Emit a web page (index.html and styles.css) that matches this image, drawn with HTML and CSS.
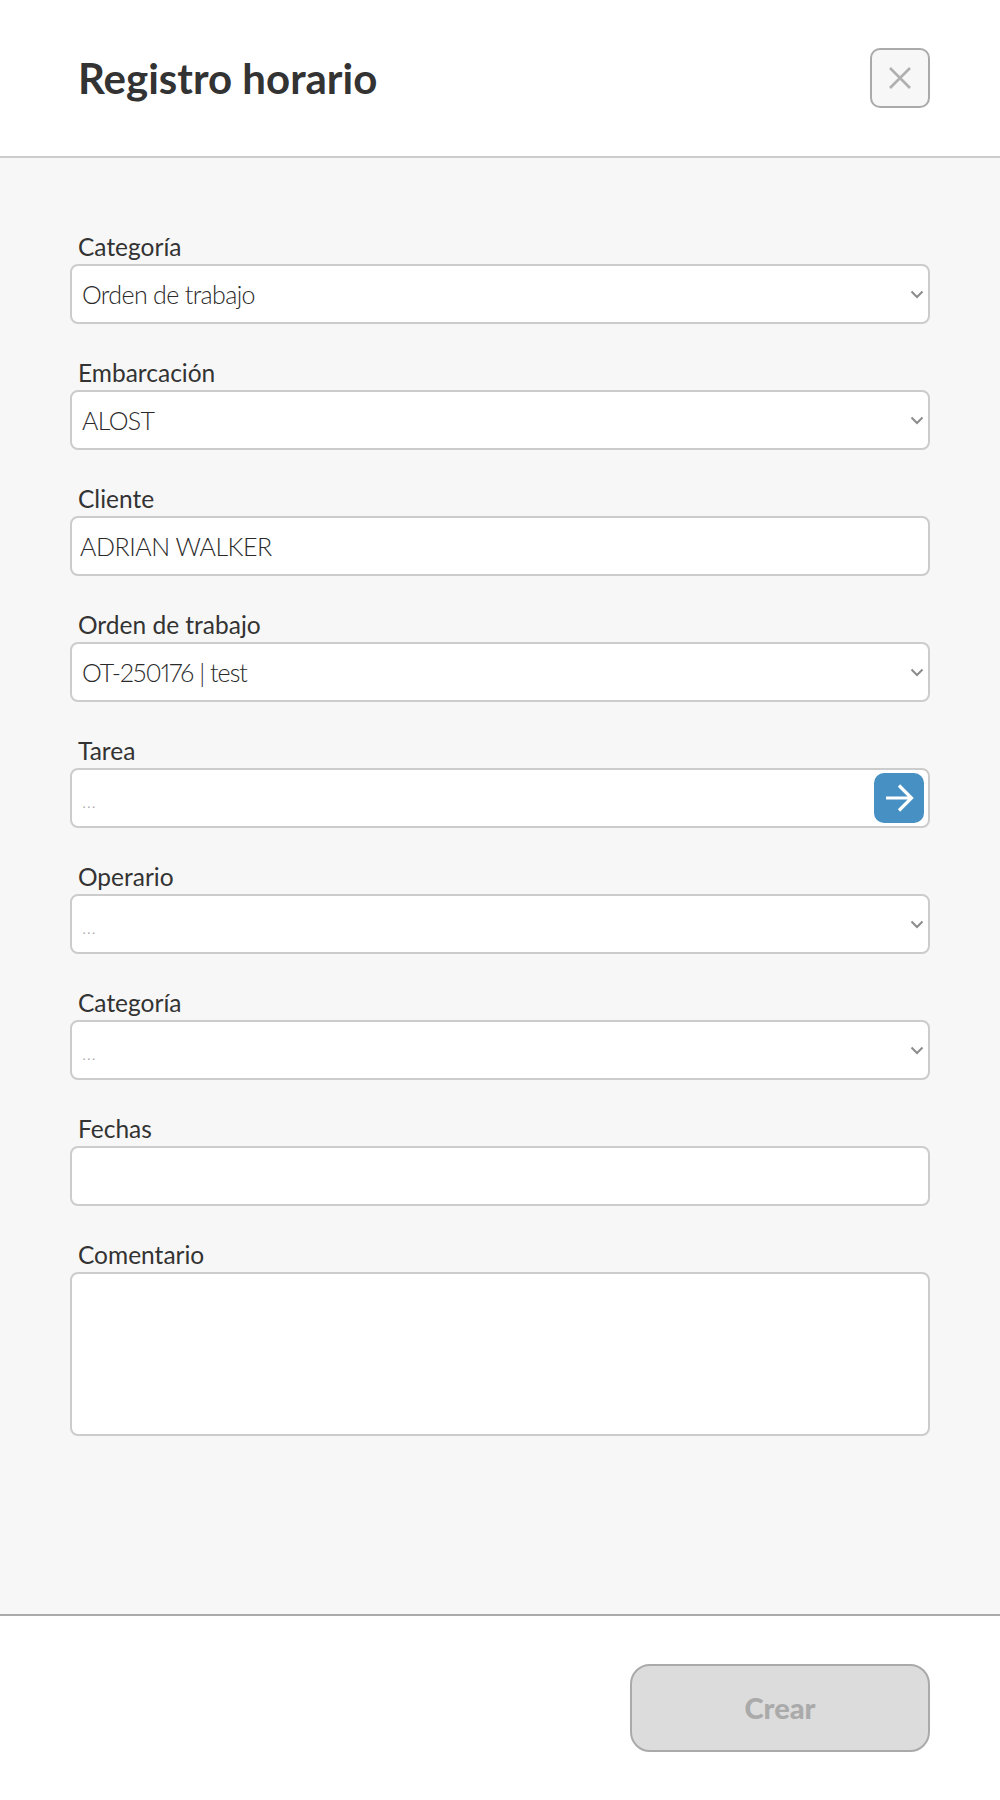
FILE: index.html
```html
<!DOCTYPE html>
<html lang="es">
<head>
<meta charset="utf-8">
<title>Registro horario</title>
<link rel="stylesheet" href="styles.css">
</head>
<body>
<div class="modal">
  <header class="head">
    <h1 class="title">Registro horario</h1>
    <button class="close" type="button" aria-label="Cerrar">
      <svg width="24" height="24" viewBox="0 0 24 24"><path d="M2 2 L22 22 M22 2 L2 22" stroke="#b0b0b0" stroke-width="2.6" fill="none"/></svg>
    </button>
  </header>
  <main class="body">
    <div class="field">
      <label class="label">Categoría</label>
      <div class="control select"><span class="value">Orden de trabajo</span><svg class="chev" width="14" height="9" viewBox="0 0 14 9"><path d="M1.5 1.500 L7 7 L12.500 1.500" stroke="#8c8c8c" stroke-width="2" fill="none"/></svg></div>
    </div>
    <div class="field">
      <label class="label">Embarcación</label>
      <div class="control select"><span class="value">ALOST</span><svg class="chev" width="14" height="9" viewBox="0 0 14 9"><path d="M1.5 1.500 L7 7 L12.500 1.500" stroke="#8c8c8c" stroke-width="2" fill="none"/></svg></div>
    </div>
    <div class="field">
      <label class="label">Cliente</label>
      <div class="control text"><span class="value">ADRIAN WALKER</span></div>
    </div>
    <div class="field">
      <label class="label">Orden de trabajo</label>
      <div class="control select"><span class="value code">OT-250176 | test</span><svg class="chev" width="14" height="9" viewBox="0 0 14 9"><path d="M1.5 1.500 L7 7 L12.500 1.500" stroke="#8c8c8c" stroke-width="2" fill="none"/></svg></div>
    </div>
    <div class="field">
      <label class="label">Tarea</label>
      <div class="control task"><span class="value empty">...</span>
        <button class="go" type="button" aria-label="Buscar"><svg width="30" height="30" viewBox="0 0 30 30"><path d="M2 15 H27 M15 2.500 L27.500 15 L15 27.500" stroke="#fff" stroke-width="3.200" fill="none"/></svg></button>
      </div>
    </div>
    <div class="field">
      <label class="label">Operario</label>
      <div class="control select"><span class="value empty">...</span><svg class="chev" width="14" height="9" viewBox="0 0 14 9"><path d="M1.5 1.500 L7 7 L12.500 1.500" stroke="#8c8c8c" stroke-width="2" fill="none"/></svg></div>
    </div>
    <div class="field">
      <label class="label">Categoría</label>
      <div class="control select"><span class="value empty">...</span><svg class="chev" width="14" height="9" viewBox="0 0 14 9"><path d="M1.5 1.500 L7 7 L12.500 1.500" stroke="#8c8c8c" stroke-width="2" fill="none"/></svg></div>
    </div>
    <div class="field">
      <label class="label">Fechas</label>
      <div class="control text"></div>
    </div>
    <div class="field">
      <label class="label">Comentario</label>
      <div class="control area"></div>
    </div>
  </main>
  <footer class="foot">
    <button class="submit" type="button" disabled>Crear</button>
  </footer>
</div>
</body>
</html>
```
FILE: styles.css
```css
* { box-sizing: border-box; }
html, body { margin: 0; padding: 0; background: #fff; }
body { font-family: "Lato", "Noto Sans", sans-serif; color: #333; }
.modal { width: 1000px; height: 1800px; display: flex; flex-direction: column; }
.head { height: 158px; padding: 47px 70px 0 78px; display: flex; justify-content: space-between; align-items: flex-start; border-bottom: 2px solid #ccc; background: #fff; }
.title { margin: 0; font-size: 42px; line-height: 62px; font-weight: 700; color: #333; }
.close { width: 60px; height: 60px; margin-top: 1px; padding: 0; display: flex; align-items: center; justify-content: center; background: #f7f7f7; border: 2px solid #aaa; border-radius: 10px; }
.body { height: 1458px; background: #f7f7f7; padding: 76px 70px 0; display: flex; flex-direction: column; gap: 36px; border-bottom: 2px solid #aaa; }
.field { display: flex; flex-direction: column; }
.label { height: 30px; padding-left: 8px; font-size: 24.5px; line-height: 25px; color: #333; }
.control { height: 60px; background: #fff; border: 2px solid #ccc; border-radius: 8px; display: flex; align-items: center; }
.value { font-size: 25px; font-weight: 300; color: #2a2a2a; letter-spacing: -0.65px; font-variant-numeric: proportional-nums; }
.value.code { letter-spacing: -0.95px; }
.select .value { padding-left: 10px; }
.text .value { padding-left: 8px; letter-spacing: -0.45px; }
.select { justify-content: space-between; padding-right: 4px; }
.value.empty { font-size: 18px; color: #aaa; padding-left: 10px; position: relative; top: 3px; letter-spacing: 0.5px; }
.task { justify-content: space-between; padding-right: 4px; }
.go { width: 50px; height: 50px; padding: 0; border: none; border-radius: 10px; background: #4790c3; display: flex; align-items: center; justify-content: center; }
.area { height: 164px; }
.foot { flex: 1; padding: 48px 70px 0; display: flex; justify-content: flex-end; align-items: flex-start; background: #fff; }
.submit { width: 300px; height: 88px; padding: 0 0 2px; background: #dcdcdc; border: 2px solid #aaa; border-radius: 20px; font-family: inherit; font-size: 29px; font-weight: 900; color: #aaa; }
```
